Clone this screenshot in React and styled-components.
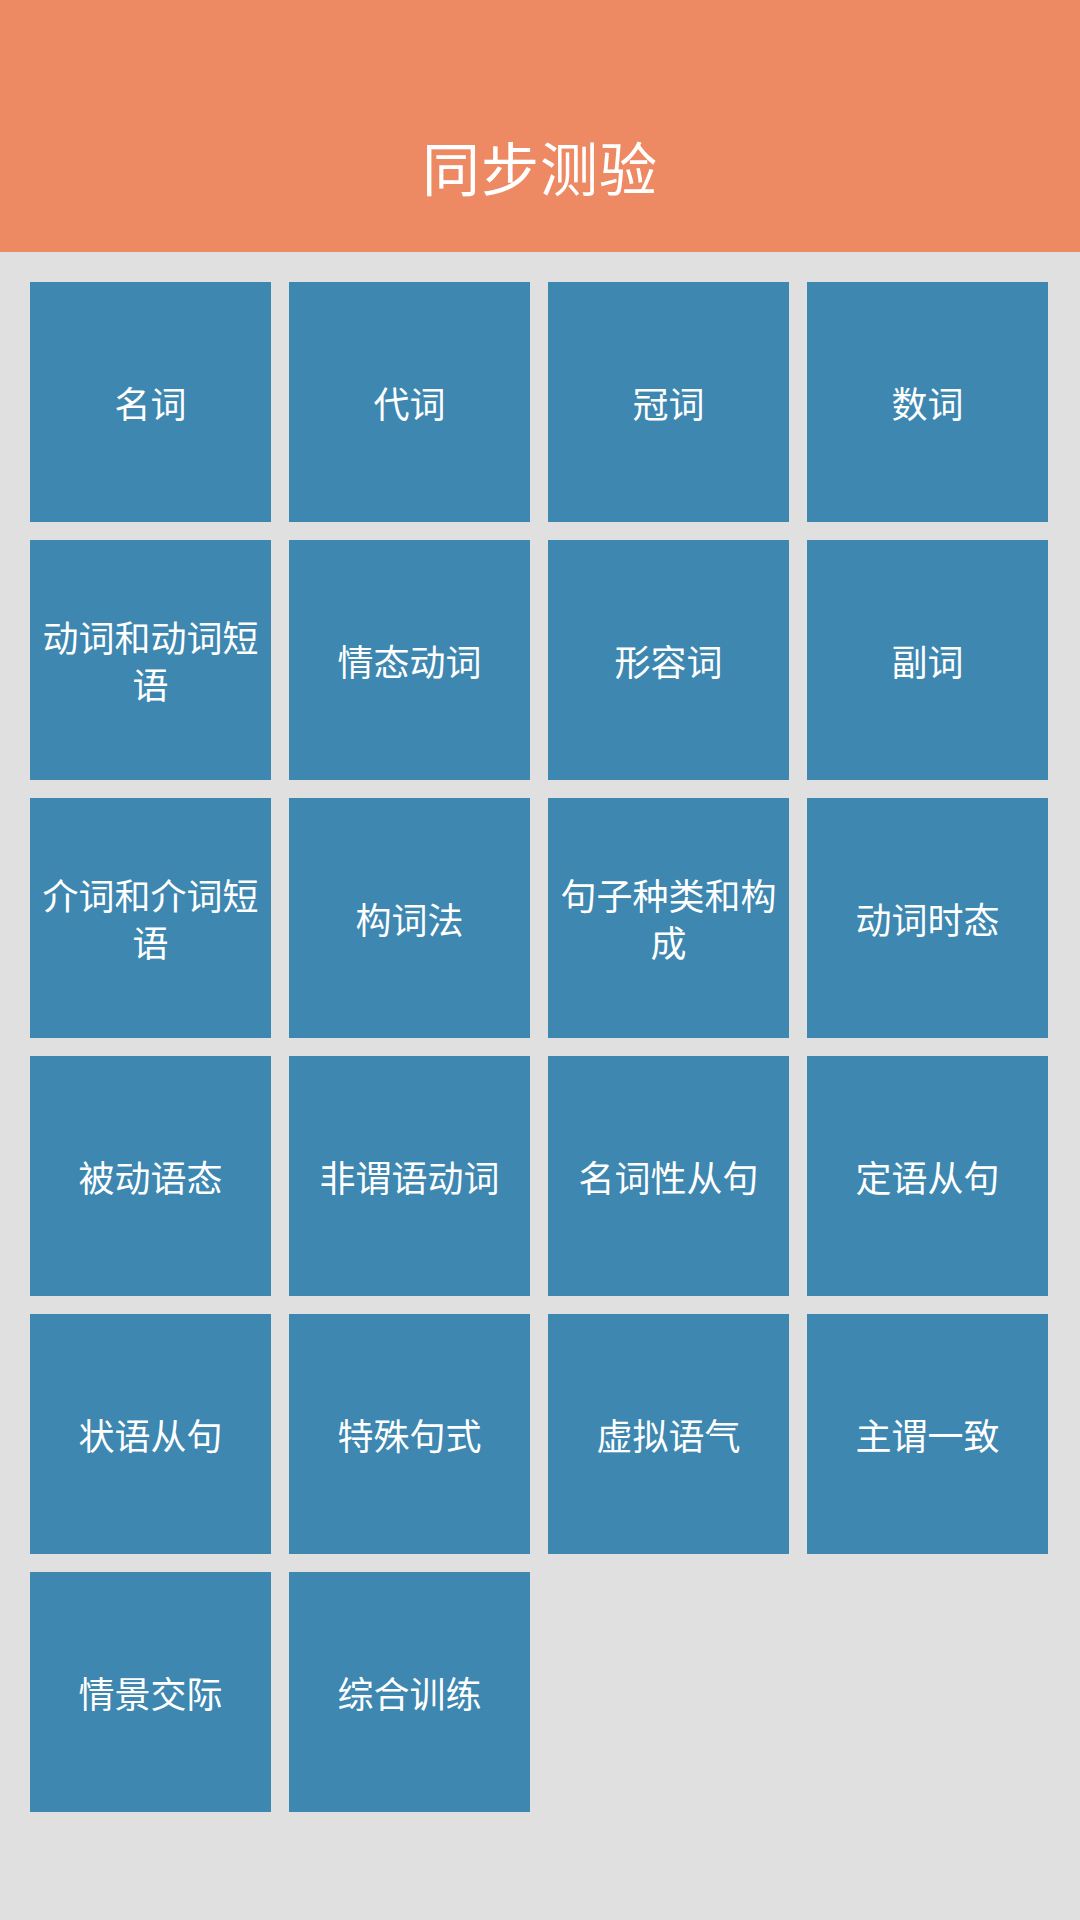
import React from 'react';
import styled, { createGlobalStyle } from 'styled-components';

const topics = [
  '名词', '代词', '冠词', '数词',
  '动词和动词短语', '情态动词', '形容词', '副词',
  '介词和介词短语', '构词法', '句子种类和构成', '动词时态',
  '被动语态', '非谓语动词', '名词性从句', '定语从句',
  '状语从句', '特殊句式', '虚拟语气', '主谓一致',
  '情景交际', '综合训练',
];

function App() {
  return (
    <React.Fragment>
      <GlobalStyle />
      <Page>
        <Header>
          <Title>同步测验</Title>
        </Header>
        <TopicGrid>
          {topics.map((name) => (
            <TopicTile key={name}>
              <TopicName>{name}</TopicName>
            </TopicTile>
          ))}
        </TopicGrid>
      </Page>
    </React.Fragment>
  );
}

export default App;

const GlobalStyle = createGlobalStyle`
  html, body {
    margin: 0;
    padding: 0;
    background: #e0e0e0;
  }
  body {
    font-family: "Noto Sans CJK SC", "Noto Sans", sans-serif;
  }
`;

const Page = styled.div`
  width: 1080px;
  min-height: 1920px;
  background: #e0e0e0;
`;

const Header = styled.header`
  height: 252px;
  background: #ee8a63;
  display: flex;
  align-items: center;
  justify-content: center;
  padding-top: 80px;
  box-sizing: border-box;
`;

const Title = styled.h1`
  margin: 0;
  color: #ffffff;
  font-size: 58px;
  font-weight: 400;
  line-height: 1;
  letter-spacing: 1px;
`;

const TopicGrid = styled.div`
  display: grid;
  grid-template-columns: repeat(4, 241px);
  grid-auto-rows: 240px;
  gap: 18px;
  padding: 30px 30px;
`;

const TopicTile = styled.div`
  background: #3d87b0;
  display: flex;
  align-items: center;
  justify-content: center;
  padding: 0 6px;
  cursor: pointer;
`;

const TopicName = styled.span`
  color: #ffffff;
  font-size: 36px;
  line-height: 47px;
  text-align: center;
`;
